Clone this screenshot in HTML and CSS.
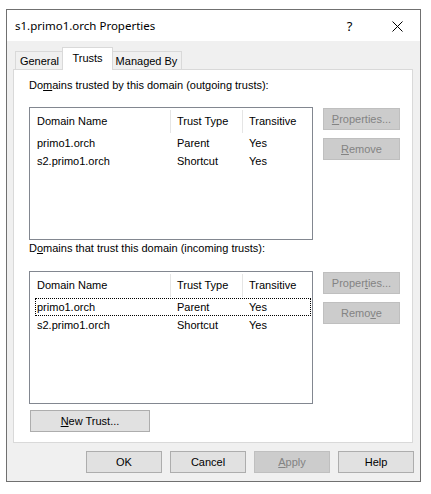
FILE: index.html
```html
<!DOCTYPE html>
<html>
<head>
<meta charset="utf-8">
<title>s1.primo1.orch Properties</title>
<link rel="stylesheet" href="styles.css">
</head>
<body>
<div class="window">
  <div class="titlebar">
    <span class="title">s1.primo1.orch Properties</span>
    <span class="cap-btn help-btn">?</span>
    <span class="cap-btn close-btn">
      <svg width="11" height="11" viewBox="0 0 11 11"><path d="M0.5 0.5 L10.5 10.5 M10.5 0.5 L0.5 10.5" stroke="#000" stroke-width="1" fill="none"/></svg>
    </span>
  </div>
  <div class="client">
    <div class="tabs">
      <div class="tab tab-general">General</div>
      <div class="tab tab-active">Trusts</div>
      <div class="tab tab-managed">Managed By</div>
    </div>
    <div class="panel">
      <div class="label">Do<u>m</u>ains trusted by this domain (outgoing trusts):</div>
      <div class="group">
        <div class="list">
          <div class="lv-head">
            <div class="col">Domain Name</div>
            <div class="col">Trust Type</div>
            <div class="col">Transitive</div>
          </div>
          <div class="lv-row"><span>primo1.orch</span><span>Parent</span><span>Yes</span></div>
          <div class="lv-row"><span>s2.primo1.orch</span><span>Shortcut</span><span>Yes</span></div>
        </div>
        <div class="side">
          <button class="btn side-btn" disabled><u>P</u>roperties...</button>
          <button class="btn side-btn" disabled><u>R</u>emove</button>
        </div>
      </div>
      <div class="label label2">D<u>o</u>mains that trust this domain (incoming trusts):</div>
      <div class="group group2">
        <div class="list">
          <div class="lv-head">
            <div class="col">Domain Name</div>
            <div class="col">Trust Type</div>
            <div class="col">Transitive</div>
          </div>
          <div class="lv-row focus"><span>primo1.orch</span><span>Parent</span><span>Yes</span></div>
          <div class="lv-row"><span>s2.primo1.orch</span><span>Shortcut</span><span>Yes</span></div>
        </div>
        <div class="side">
          <button class="btn side-btn" disabled>Proper<u>t</u>ies...</button>
          <button class="btn side-btn" disabled>Remo<u>v</u>e</button>
        </div>
      </div>
      <button class="btn newtrust"><u>N</u>ew Trust...</button>
    </div>
    <div class="footer">
      <button class="btn foot-btn">OK</button>
      <button class="btn foot-btn">Cancel</button>
      <button class="btn foot-btn" disabled><u>A</u>pply</button>
      <button class="btn foot-btn">Help</button>
    </div>
  </div>
</div>
</body>
</html>
```

FILE: styles.css
```css
* { box-sizing: border-box; }

body {
  margin: 0;
  background: #ffffff;
  font-family: "Liberation Sans", Arial, sans-serif;
  font-size: 11px;
  color: #000;
}

.window {
  margin: 9px 0 0 6px;
  width: 415px;
  border: 1px solid #707070;
  background: #f0f0f0;
}

.titlebar {
  height: 31px;
  background: #fff;
  display: flex;
  align-items: center;
}

.title {
  flex: 1;
  padding-left: 8px;
  font-family: "Noto Sans", sans-serif;
  font-size: 11.5px;
}

.cap-btn {
  width: 46px;
  height: 31px;
  display: flex;
  align-items: center;
  justify-content: center;
}

.help-btn {
  font-family: "Noto Sans", sans-serif;
  font-size: 13px;
  padding-right: 3px;
}

.close-btn svg { display: block; margin-top: 1px; }

.client {
  padding: 6px 7px 8px 6px;
}

.tabs {
  display: flex;
  align-items: flex-end;
  height: 22px;
  padding-left: 2px;
  position: relative;
  z-index: 1;
}

.tab {
  height: 18px;
  border: 1px solid #d9d9d9;
  border-bottom: none;
  background: #f0f0f0;
  text-align: center;
  line-height: 18px;
  white-space: nowrap;
}

.tab-general { width: 49px; }

.tab-active {
  width: 51px;
  height: 23px;
  margin: 0 -2px -1px;
  background: #fff;
  line-height: 21px;
  position: relative;
  z-index: 2;
}

.tab-managed { width: 71px; }

.panel {
  height: 374px;
  border: 1px solid #d9d9d9;
  background: #fff;
  padding: 8px 0 0 15px;
}

.label {
  height: 14px;
  line-height: 14px;
}

.label2 { margin-top: 1px; }

.group {
  display: flex;
  gap: 10px;
  margin-top: 15px;
}

.group2 { margin-top: 16px; }

.list {
  width: 284px;
  height: 133px;
  border: 1px solid #828790;
  background: #fff;
}

.lv-head {
  display: grid;
  grid-template-columns: 140px 72px 1fr;
  height: 26px;
}

.lv-head .col {
  padding-left: 7px;
  line-height: 26px;
  position: relative;
  white-space: nowrap;
}

.lv-head .col:not(:last-child)::after {
  content: "";
  position: absolute;
  right: -1px;
  top: 2px;
  bottom: 1px;
  width: 1px;
  background: #e5e5e5;
}

.lv-row {
  display: grid;
  grid-template-columns: 135px 72px 1fr;
  height: 18px;
  line-height: 18px;
  margin: 0 1px 0 5px;
  white-space: nowrap;
}

.lv-row span { padding-left: 7px; }
.lv-row span:first-child { padding-left: 2px; }

.focus {
  outline: 1px dotted #000;
  outline-offset: -1px;
}

.side {
  display: flex;
  flex-direction: column;
  gap: 8px;
  padding-top: 1px;
}

.btn {
  height: 22px;
  border: 1px solid #adadad;
  background: #e1e1e1;
  font-family: inherit;
  font-size: 11px;
  color: #000;
  padding: 0;
  border-radius: 0;
}

.btn:disabled {
  background: #cccccc;
  border-color: #bfbfbf;
  color: #838383;
}

.side-btn { width: 77px; }

.newtrust {
  display: block;
  width: 120px;
  margin: 6px 0 0 1px;
}

.footer {
  display: flex;
  justify-content: flex-end;
  gap: 8px;
  margin: 8px -1px 0 0;
}

.foot-btn { width: 76px; }
```
